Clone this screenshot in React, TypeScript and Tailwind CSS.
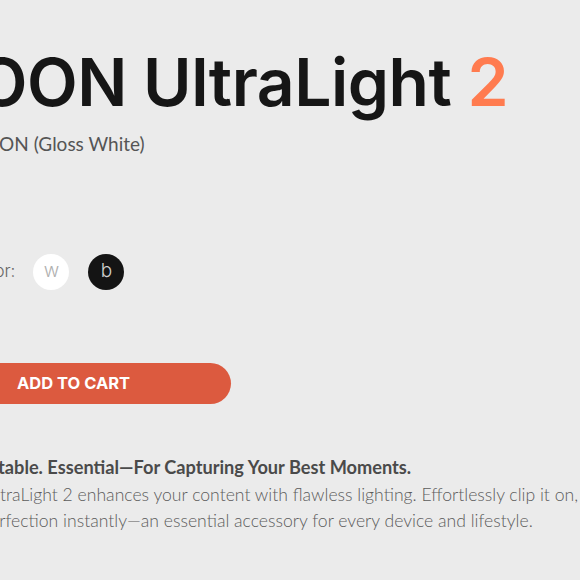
export default function App() {
  return (
    <div className="w-[580px] h-[580px] overflow-hidden bg-[#ebebeb]">
      <div className="flex flex-col pt-[49px]">
        <div className="w-[508px] flex justify-end whitespace-nowrap">
          <h1 className="text-[66px] leading-[66px] font-semibold tracking-[-0.5px] text-[#161616] font-['Inter',sans-serif]">
            LUMOON UltraLight <span className="text-[#ff7b4f]">2</span>
          </h1>
        </div>
        <p className="mt-[15px] -ml-[57px] whitespace-nowrap text-[19px] text-[#555] font-['Lato',sans-serif]">
          LUMOON (Gloss White)
        </p>
        <div className="mt-[95px] -ml-[32px] flex items-center gap-[18px]">
          <span className="text-[17px] font-light text-[#666] font-['Inter',sans-serif]">Color:</span>
          <div className="flex items-center gap-[19px]">
            <button className="w-[36px] h-[36px] rounded-full bg-white flex items-center justify-center text-[19px] font-light text-[#b0b0b0] font-['Inter',sans-serif] leading-none pb-[3px]">
              w
            </button>
            <button className="w-[36px] h-[36px] rounded-full bg-[#141414] flex items-center justify-center text-[19px] font-light text-[#d0d0d0] font-['Inter',sans-serif] leading-none pb-[2px]">
              b
            </button>
          </div>
        </div>
        <div className="mt-[73px] -ml-[60px]">
          <button className="w-[291px] h-[41px] rounded-full bg-[#dc5a3f] text-white text-[16.5px] font-bold text-left pl-[77px] font-['Inter',sans-serif]">
            ADD TO CART
          </button>
        </div>
        <div className="mt-[50px] -ml-[30px] whitespace-nowrap font-['Lato',sans-serif]">
          <p className="text-[18.2px] font-bold text-[#4a4a4a] leading-[27px]">
            Portable. Essential—For Capturing Your Best Moments.
          </p>
          <p className="text-[17.6px] font-light text-[#5c5c5c] leading-[27px] pl-[4px]">
            &nbsp;&nbsp;UltraLight 2 enhances your content with flawless lighting. Effortlessly clip it on, adjust
          </p>
          <p className="text-[17.6px] font-light text-[#5c5c5c] leading-[26px] -ml-[4px]">
            &nbsp;&nbsp;&nbsp;perfection instantly—an essential accessory for every device and lifestyle.
          </p>
        </div>
      </div>
    </div>
  );
}
